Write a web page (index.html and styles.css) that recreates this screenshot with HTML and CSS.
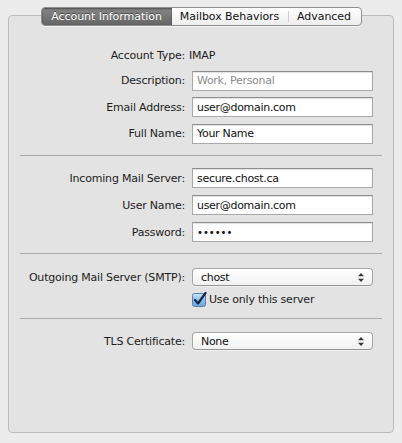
FILE: index.html
```html
<!DOCTYPE html>
<html>
<head>
<meta charset="utf-8">
<link rel="stylesheet" href="styles.css">
</head>
<body>
<div class="panel">
  <div class="tabs">
    <div class="tab tab-active">Account Information</div>
    <div class="tab tab-mailbox">Mailbox Behaviors</div>
    <div class="tab tab-advanced">Advanced</div>
  </div>

  <div class="grid sec1">
    <div class="label">Account Type:</div><div class="value">IMAP</div>
    <div class="label">Description:</div><div class="field placeholder">Work, Personal</div>
    <div class="label">Email Address:</div><div class="field">user@domain.com</div>
    <div class="label">Full Name:</div><div class="field">Your Name</div>
  </div>

  <div class="sep sep1"></div>

  <div class="grid sec2">
    <div class="label">Incoming Mail Server:</div><div class="field">secure.chost.ca</div>
    <div class="label">User Name:</div><div class="field">user@domain.com</div>
    <div class="label">Password:</div><div class="field password">••••••</div>
  </div>

  <div class="sep sep2"></div>

  <div class="grid sec3">
    <div class="label">Outgoing Mail Server (SMTP):</div>
    <div class="popup"><span>chost</span><svg class="arrows" width="6" height="9" viewBox="0 0 6 9"><path d="M3 0 L6 3.2 L0 3.2 Z M0 5.8 L6 5.8 L3 9 Z" fill="#3a3a3a"/></svg></div>
    <div class="label"></div>
    <div class="check-row">
      <svg class="checkbox" width="15" height="15" viewBox="0 0 15 15">
        <defs>
          <linearGradient id="cb" x1="0" y1="0" x2="0" y2="1">
            <stop offset="0" stop-color="#cfe3f7"/>
            <stop offset="0.5" stop-color="#8fbde9"/>
            <stop offset="1" stop-color="#6ea7e0"/>
          </linearGradient>
        </defs>
        <rect x="0.5" y="1.5" width="13" height="13" rx="2" fill="url(#cb)" stroke="#5a7fa8"/>
        <path d="M3 8 L6 11.5 L13.5 1" fill="none" stroke="#142a4c" stroke-width="2.2" stroke-linecap="round" stroke-linejoin="round"/>
      </svg>
      <span>Use only this server</span>
    </div>
  </div>

  <div class="sep sep3"></div>

  <div class="grid sec4">
    <div class="label">TLS Certificate:</div>
    <div class="popup"><span>None</span><svg class="arrows" width="6" height="9" viewBox="0 0 6 9"><path d="M3 0 L6 3.2 L0 3.2 Z M0 5.8 L6 5.8 L3 9 Z" fill="#3a3a3a"/></svg></div>
  </div>
</div>
</body>
</html>
```

FILE: styles.css
```css
html, body {
  margin: 0;
  padding: 0;
  background: #ececec;
}

body {
  font-family: "DejaVu Sans", "Liberation Sans", sans-serif;
  font-size: 11px;
  letter-spacing: -0.2px;
  color: #1c1c1c;
}

.panel {
  box-sizing: border-box;
  width: 386px;
  height: 418px;
  margin: 15px 0 0 8px;
  background: #e3e3e3;
  border: 1px solid #bcbcbc;
  border-radius: 4px;
  display: flex;
  flex-direction: column;
}

.tabs {
  box-sizing: border-box;
  display: flex;
  width: 321px;
  height: 19px;
  margin: -9px auto 0;
  border: 1px solid #8f8f8f;
  border-radius: 4px;
  overflow: hidden;
  background: linear-gradient(#ffffff, #eeeeee);
  box-shadow: 0 1px 0 rgba(255, 255, 255, 0.6);
  letter-spacing: -0.05px;
}

.tab {
  display: flex;
  align-items: center;
  justify-content: center;
  height: 100%;
  color: #111;
  white-space: nowrap;
}

.tab-active {
  width: 130px;
  color: #ffffff;
  background: linear-gradient(#878787, #656565);
  text-shadow: 0 -1px 0 rgba(0, 0, 0, 0.45);
  box-shadow: inset 0 1px 2px rgba(0, 0, 0, 0.45);
}

.tab-mailbox {
  width: 116px;
}

.tab-advanced {
  flex: 1;
  background-image: linear-gradient(#cfcfcf, #cfcfcf);
  background-size: 1px 11px;
  background-position: left center;
  background-repeat: no-repeat;
}

.grid {
  display: grid;
  grid-template-columns: 176px 181px;
  column-gap: 7px;
  align-items: center;
}

.sec1 {
  margin-top: 20px;
  grid-template-rows: 18px 20px 20px 20px;
  row-gap: 6.5px;
}

.sec2 {
  margin-top: 12px;
  grid-template-rows: 20px 20px 20px;
  row-gap: 7px;
}

.sec3 {
  margin-top: 14px;
  grid-template-rows: 18px 14px;
  row-gap: 6px;
}

.sec4 {
  margin-top: 13px;
  grid-template-rows: 18px;
}

.label {
  text-align: right;
  white-space: nowrap;
}

.value {
  margin-left: -3px;
}

.field {
  box-sizing: border-box;
  height: 20px;
  display: flex;
  align-items: center;
  padding-left: 4px;
  background: #ffffff;
  border: 1px solid #a9a9a9;
  border-top-color: #8e8e8e;
  box-shadow: inset 0 1px 1px rgba(0, 0, 0, 0.12);
  letter-spacing: -0.3px;
  color: #111;
  white-space: nowrap;
}

.placeholder {
  color: #8c8c8c;
}

.password {
  font-size: 10px;
  letter-spacing: 0;
}

.sep {
  height: 0;
  border-top: 1px solid #a9a9a9;
  margin-left: 11px;
  margin-right: 11px;
}

.sep1 { margin-top: 11.5px; }
.sep2 { margin-top: 11px; }
.sep3 { margin-top: 12px; }

.popup {
  box-sizing: border-box;
  height: 18px;
  display: flex;
  align-items: center;
  justify-content: space-between;
  padding: 0 8px 0 8px;
  background: linear-gradient(#ffffff, #f1f1f1);
  border: 1px solid #a6a6a6;
  border-bottom-color: #959595;
  border-radius: 4px;
  box-shadow: 0 1px 0 rgba(255, 255, 255, 0.5);
  letter-spacing: -0.3px;
  color: #111;
}

.check-row {
  display: flex;
  align-items: center;
  gap: 2px;
  white-space: nowrap;
}

.checkbox {
  display: block;
  flex: none;
}
```
